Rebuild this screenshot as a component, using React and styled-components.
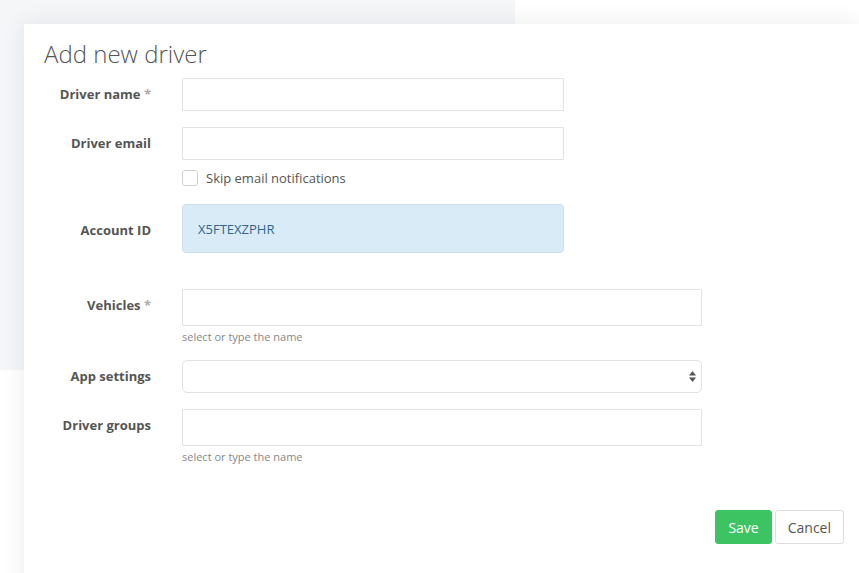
import React from "react";
import styled, { createGlobalStyle } from "styled-components";

const GlobalStyle = createGlobalStyle`
  html, body { margin: 0; padding: 0; background: #fff; overflow: hidden; }
  body { font-family: "Open Sans", "Liberation Sans", sans-serif; color: #555; }
  * { box-sizing: border-box; }
`;

const Page = styled.div`
  position: relative;
  width: 859px;
  height: 573px;
  overflow: hidden;
  background: #fff;
`;

const Backdrop = styled.div`
  width: 515px;
  height: 370px;
  background: #f4f6f8;
`;

const Modal = styled.div`
  position: absolute;
  top: 24px;
  left: 24px;
  right: 0;
  bottom: -40px;
  background: #fff;
  box-shadow: 0 0 22px rgba(30, 40, 60, 0.09);
  padding: 17px 15px 0 20px;
  display: flex;
  flex-direction: column;
`;

const Title = styled.h2`
  margin: 0;
  font-size: 24px;
  line-height: 26px;
  font-weight: 300;
  color: #555;
`;

const Row = styled.div`
  display: grid;
  grid-template-columns: 107px ${(p) => p.$width || 382}px;
  column-gap: 31px;
  margin-top: ${(p) => p.$mt || 0}px;
  align-items: ${(p) => (p.$center ? "center" : "start")};
`;

const Label = styled.label`
  text-align: right;
  font-size: 13px;
  font-weight: 700;
  line-height: 18px;
  padding-top: ${(p) => (p.$center ? 2 : 7)}px;
  color: #555;
  white-space: nowrap;
`;

const Star = styled.span`
  color: #aaa;
  font-weight: 700;
`;

const Field = styled.div`
  display: flex;
  flex-direction: column;
`;

const TextInput = styled.div`
  height: ${(p) => p.$h || 33}px;
  border: 1px solid #e2e2e2;
  border-radius: 1px;
  background: #fff;
`;

const Help = styled.div`
  margin-top: 4px;
  font-size: 11px;
  line-height: 14px;
  color: #888;
`;

const CheckRow = styled.div`
  display: flex;
  align-items: center;
  gap: 8px;
  height: 16px;
  font-size: 13px;
  color: #555;
  padding-top: 1px;
`;

const CheckBox = styled.span`
  width: 16px;
  height: 16px;
  border: 1px solid #cfcfcf;
  border-radius: 3px;
  background: #fff;
`;

const Readonly = styled.div`
  height: 49px;
  display: flex;
  align-items: center;
  padding-left: 15px;
  background: #d9ebf7;
  border: 1px solid #c8dff0;
  border-radius: 4px;
  color: #31658c;
  font-size: 13px;
`;

const SelectBox = styled.div`
  height: 33px;
  border: 1px solid #e2e2e2;
  border-radius: 5px;
  display: flex;
  align-items: center;
  justify-content: flex-end;
  padding-right: 5px;
`;

const Footer = styled.div`
  display: flex;
  justify-content: flex-end;
  gap: 3px;
  margin-top: 46px;
`;

const Button = styled.button`
  height: 34px;
  padding: 0 12px;
  font-family: inherit;
  font-size: 14px;
  border-radius: 3px;
  border: 1px solid ${(p) => (p.$primary ? "#3cc463" : "#dedede")};
  background: ${(p) => (p.$primary ? "#3cc463" : "#fff")};
  color: ${(p) => (p.$primary ? "#fff" : "#555")};
  cursor: pointer;
`;

const Arrows = () => (
  <svg width="7" height="11" viewBox="0 0 7 11">
    <path d="M3.5 0 L7 4.5 L0 4.5 Z" fill="#555" />
    <path d="M0 6.5 L7 6.5 L3.5 11 Z" fill="#555" />
  </svg>
);

export default function App() {
  return (
    <>
      <GlobalStyle />
      <Page>
        <Backdrop />
        <Modal>
          <Title>Add new driver</Title>
          <Row $mt={11}>
            <Label>
              Driver name <Star>*</Star>
            </Label>
            <TextInput />
          </Row>
          <Row $mt={16}>
            <Label>Driver email</Label>
            <TextInput />
          </Row>
          <Row $mt={9}>
            <span />
            <CheckRow>
              <CheckBox />
              Skip email notifications
            </CheckRow>
          </Row>
          <Row $mt={19} $center>
            <Label $center>Account ID</Label>
            <Readonly>X5FTEXZPHR</Readonly>
          </Row>
          <Row $mt={36} $width={520}>
            <Label>
              Vehicles <Star>*</Star>
            </Label>
            <Field>
              <TextInput $h={37} />
              <Help>select or type the name</Help>
            </Field>
          </Row>
          <Row $mt={16} $width={520}>
            <Label>App settings</Label>
            <SelectBox>
              <Arrows />
            </SelectBox>
          </Row>
          <Row $mt={16} $width={520}>
            <Label>Driver groups</Label>
            <Field>
              <TextInput $h={37} />
              <Help>select or type the name</Help>
            </Field>
          </Row>
          <Footer>
            <Button $primary>Save</Button>
            <Button>Cancel</Button>
          </Footer>
        </Modal>
      </Page>
    </>
  );
}
